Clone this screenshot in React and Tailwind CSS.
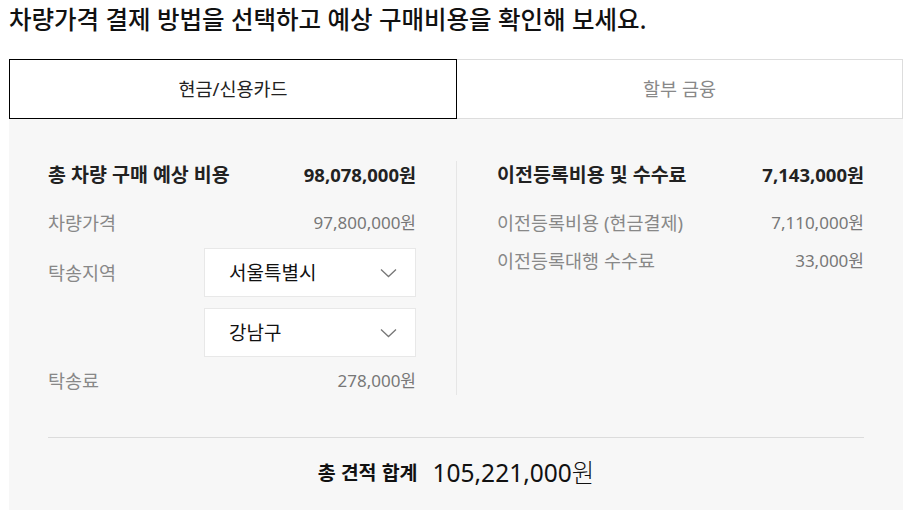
import React, { useState } from "react";

const font = { fontFamily: '"Noto Sans", "Noto Sans CJK KR", sans-serif' };

const Chevron = () => (
	<svg width="17" height="10" viewBox="0 0 17 10" fill="none">
		<path d="M1 1.5l7.5 7 7.5-7" stroke="#777" strokeWidth="1.3" />
	</svg>
);

const SelectBox = ({ value }) => (
	<div className="w-[212px] h-[49px] bg-white border border-[#e8e8e8] flex items-center justify-between pl-[24px] pr-[18px]">
		<span className="text-[19px] leading-[28px] text-[#111]">{value}</span>
		<Chevron />
	</div>
);

const Row = ({ label, value }) => (
	<div className="flex items-center justify-between h-[28px]">
		<span className="text-[18.5px] text-[#888]">{label}</span>
		<span className="text-[17px] text-[#777]">{value}</span>
	</div>
);

const Header = ({ label, value }) => (
	<div className="flex items-center justify-between h-[28px]">
		<span className="text-[19.5px] font-bold text-[#222]">{label}</span>
		<span className="text-[18.5px] font-bold text-[#222]">{value}</span>
	</div>
);

export default function App() {
	const [tab, setTab] = useState("cash");

	return (
		<div className="w-[907px] h-[512px] bg-white overflow-hidden" style={font}>
			{/* Title */}
			<h2 className="pl-[9px] pt-[3px] h-[59px] text-[24.5px] leading-[34px] font-medium text-[#111]">
				차량가격 결제 방법을 선택하고 예상 구매비용을 확인해 보세요.
			</h2>

			{/* Tabs */}
			<div className="ml-[9px] w-[894px] flex h-[60px]">
				<button
					onClick={() => setTab("cash")}
					className="w-[448px] h-full border border-black bg-white text-[18.5px] text-[#222]"
				>
					현금/신용카드
				</button>
				<button
					onClick={() => setTab("loan")}
					className="flex-1 h-full border-y border-r border-[#ddd] bg-white text-[18.5px] text-[#888]"
				>
					할부 금융
				</button>
			</div>

			{/* Panel */}
			<div className="ml-[9px] w-[894px] bg-[#f7f7f7] pt-[42px] px-[39px] pb-[21px]">
				<div className="flex">
					<div className="w-[368px] flex flex-col">
						<Header label="총 차량 구매 예상 비용" value="98,078,000원" />
						<div className="mt-[20px]">
							<Row label="차량가격" value="97,800,000원" />
						</div>
						<div className="mt-[11px] flex items-center justify-between">
							<span className="text-[18.5px] text-[#888]">탁송지역</span>
							<SelectBox value="서울특별시" />
						</div>
						<div className="mt-[11px] flex justify-end">
							<SelectBox value="강남구" />
						</div>
						<div className="mt-[10px]">
							<Row label="탁송료" value="278,000원" />
						</div>
					</div>
					<div className="mx-[40px] border-l border-[#e6e6e6]" />
					<div className="flex-1 flex flex-col">
						<Header label="이전등록비용 및 수수료" value="7,143,000원" />
						<div className="mt-[20px]">
							<Row label="이전등록비용 (현금결제)" value="7,110,000원" />
						</div>
						<div className="mt-[10px]">
							<Row label="이전등록대행 수수료" value="33,000원" />
						</div>
					</div>
				</div>

				<div className="mt-[42px] border-t border-[#dcdcdc]" />

				<div className="mt-[19px] flex items-center justify-center gap-[15px] h-[32px]">
					<span className="text-[19.5px] font-bold text-[#111]">총 견적 합계</span>
					<span className="text-[24.5px] text-[#111]">
						105,221,000<span className="font-light">원</span>
					</span>
				</div>
			</div>
		</div>
	);
}
